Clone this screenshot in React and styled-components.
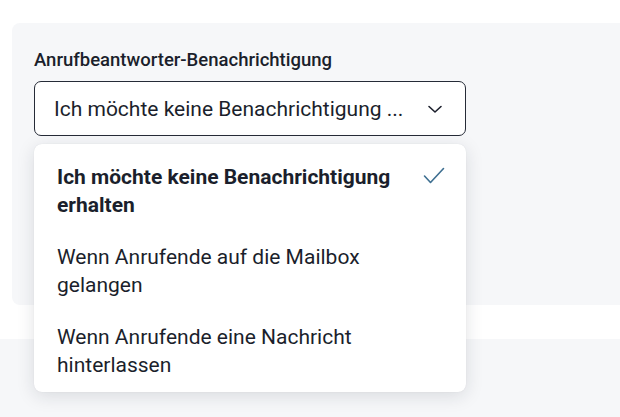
import styled, { createGlobalStyle } from "styled-components";

const GlobalStyle = createGlobalStyle`
  html, body {
    margin: 0;
    padding: 0;
    background: #ffffff;
  }
  body {
    font-family: Roboto, "Liberation Sans", sans-serif;
    color: #1b1f2c;
    -webkit-font-smoothing: antialiased;
  }
`

const Page = styled.div`
  width: 620px;
  height: 417px;
  overflow: hidden;
  padding-top: 23px;
  box-sizing: border-box;
`

const Panel = styled.section`
  margin-left: 12px;
  height: 282px;
  box-sizing: border-box;
  padding: 25px 0 0 22px;
  background: #f6f7f9;
  border-radius: 8px 0 0 8px;
`

const Label = styled.div`
  font-size: 18.5px;
  line-height: 24px;
  font-weight: 500;
  margin-bottom: 9px;
`

const SelectWrap = styled.div`
  position: relative;
  width: 432px;
`

const SelectBox = styled.button`
  width: 100%;
  height: 55px;
  box-sizing: border-box;
  display: flex;
  align-items: center;
  justify-content: space-between;
  gap: 10px;
  padding: 0 22px 0 19px;
  background: #ffffff;
  border: 1.5px solid #262b37;
  border-radius: 7px;
  font-family: inherit;
  font-size: 21px;
  color: #1b1f2c;
  text-align: left;
`

const SelectText = styled.span`
  white-space: nowrap;
  overflow: hidden;
`

const Menu = styled.ul`
  position: absolute;
  top: calc(100% + 8px);
  left: 0;
  width: 100%;
  height: 248px;
  box-sizing: border-box;
  margin: 0;
  padding: 7px 0 0;
  list-style: none;
  background: #ffffff;
  border-radius: 8px;
  box-shadow: 0 4px 18px rgba(20, 30, 50, 0.13), 0 0 1px rgba(20, 30, 50, 0.12);
  z-index: 2;
`

const Option = styled.li`
  display: flex;
  align-items: flex-start;
  justify-content: space-between;
  gap: 8px;
  padding: 12px 21px 12px 23px;
  font-size: 21px;
  line-height: 28px;
  font-weight: ${(props) => (props.selected ? 700 : 400)};
`

const OptionText = styled.span`
  flex: 1;
  max-width: 350px;
`

const Check = styled.svg`
  flex: none;
  margin-top: 4px;
`

const Lower = styled.section`
  margin-top: 34px;
  height: 80px;
  background: #f6f7f9;
`

const options = [
  "Ich möchte keine Benachrichtigung erhalten",
  "Wenn Anrufende auf die Mailbox gelangen",
  "Wenn Anrufende eine Nachricht hinterlassen",
]

function Chevron() {
  return (
    <svg width="16" height="16" viewBox="0 0 16 16" fill="none">
      <path d="M2 5.5 L8 11 L14 5.5" stroke="#1b1f2c" strokeWidth="1.6" strokeLinecap="round" strokeLinejoin="round" />
    </svg>
  )
}

export default function App() {
  const selected = 0

  return (
    <Page>
      <GlobalStyle />
      <Panel>
        <Label>Anrufbeantworter-Benachrichtigung</Label>
        <SelectWrap>
          <SelectBox type="button">
            <SelectText>Ich möchte keine Benachrichtigung ...</SelectText>
            <Chevron />
          </SelectBox>
          <Menu>
            {options.map((text, i) => (
              <Option key={text} selected={i === selected}>
                <OptionText>{text}</OptionText>
                {i === selected && (
                  <Check width="22" height="18" viewBox="0 0 22 18" fill="none">
                    <path d="M1.5 9 L7.5 15.5 L20.5 1.5" stroke="#3e6f91" strokeWidth="1.6" strokeLinecap="round" strokeLinejoin="round" />
                  </Check>
                )}
              </Option>
            ))}
          </Menu>
        </SelectWrap>
      </Panel>
      <Lower />
    </Page>
  )
}
